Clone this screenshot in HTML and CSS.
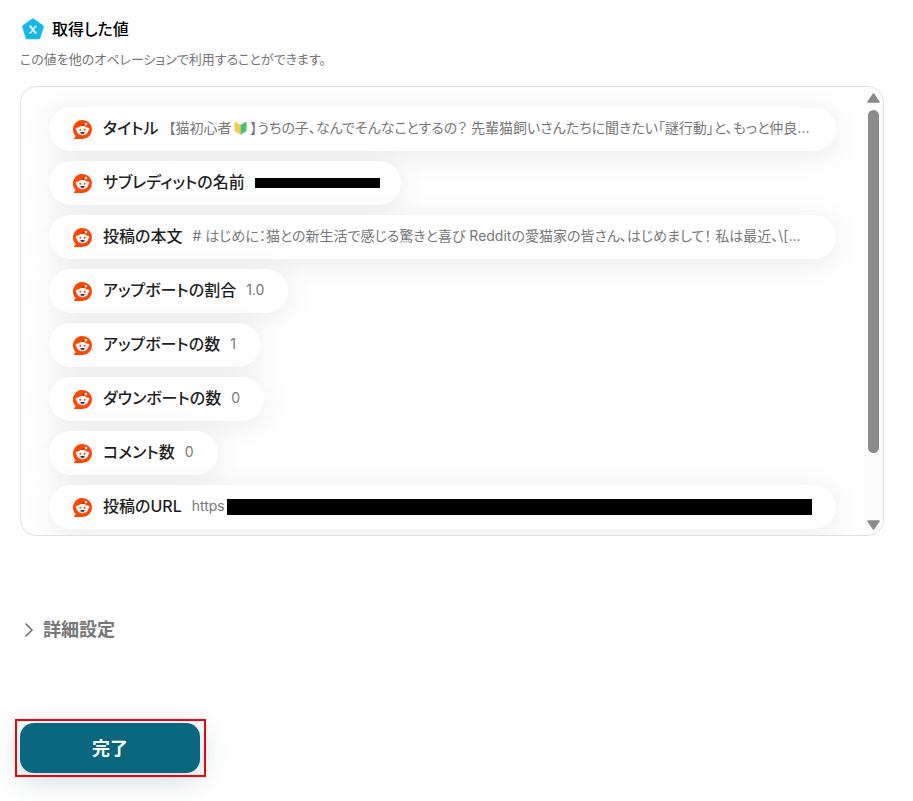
FILE: index.html
```html
<!DOCTYPE html>
<html lang="ja">
<head>
    <meta charset="UTF-8">
    <meta name="viewport" content="width=device-width, initial-scale=1.0">
    <title>取得した値</title>
    <link rel="stylesheet" href="styles.css">
</head>
<body>
    <!-- shared icon for every value -->
    <svg class="sprite" aria-hidden="true">
        <defs>
            <linearGradient id="face" x1="0" y1="0" x2="0" y2="1">
                <stop offset="0.4" stop-color="#ffffff"/>
                <stop offset="1" stop-color="#c3d3dc"/>
            </linearGradient>
        </defs>
        <symbol id="reddit" viewBox="0 0 18 18">
            <path d="M9 0a9 9 0 1 1 0 18H1.500c-.6 0-.8-.6-.4-1l1.500-1.700A9 9 0 0 1 9 0z" fill="#ff4500"/>
            <circle cx="4" cy="8.600" r="1.500" fill="#f4f7f8"/>
            <circle cx="14" cy="8.600" r="1.500" fill="#f4f7f8"/>
            <path d="M9.200 5.800c0-1.300.9-2 2.300-2.200" fill="none" stroke="#7a1c08" stroke-width="0.800"/>
            <circle cx="12.200" cy="3.900" r="1.300" fill="#f4f7f8"/>
            <ellipse cx="9" cy="10.200" rx="5.500" ry="4.400" fill="url(#face)"/>
            <circle cx="6.900" cy="9.300" r="0.900" fill="#ff4500"/>
            <circle cx="11.100" cy="9.300" r="0.900" fill="#ff4500"/>
            <path d="M6.900 11.600q2.100-.5 4.200 0c-.3 1-1.100 1.500-2.100 1.500s-1.800-.5-2.100-1.500z" fill="#1c2a30"/>
        </symbol>
    </svg>

    <main>
        <h1>
            <svg class="title-icon" viewBox="0 0 24 24" aria-hidden="true">
                <path d="M10.700 1.900a2.200 2.200 0 0 1 2.600 0l8.800 6.300a1.800 1.800 0 0 1 .6 2l-3.300 10.500a2.200 2.200 0 0 1-2.100 1.500H6.700a2.200 2.200 0 0 1-2.100-1.500L1.300 10.200a1.800 1.800 0 0 1 .6-2z" fill="#13b9ec"/>
                <path d="M8.500 9.500h1.200l4.600 6.300h1.200" fill="none" stroke="#fff" stroke-width="1.900" stroke-linejoin="round"/>
                <path d="M15.600 9.500h-1.200l-4.800 6.300H8.400" fill="none" stroke="#fff" stroke-width="1.400" stroke-linejoin="round"/>
            </svg>
            取得した値
        </h1>
        <p class="description">この値を他のオペレーションで利用することができます。</p>

        <div class="values">
            <ul class="value-list">
                <li class="value value-wide">
                    <svg class="icon" aria-hidden="true"><use href="#reddit"/></svg>
                    <span class="label">タイトル</span>
                    <span class="text">【猫初心者<svg class="beginner" viewBox="0 0 13 14" role="img" aria-label="初心者マーク"><path d="M.5 1.500Q.5.300 1.500.9L6.500 4v9.800L1.100 10.500Q.5 10.100.5 9.400z" fill="#fcc850"/><path d="M12.500 1.500q0-1.200-1-.6L6.500 4v9.800l5.400-3.300q.6-.4.600-1.100z" fill="#43c46b"/></svg>】うちの子、なんでそんなことするの？ 先輩猫飼いさんたちに聞きたい「謎行動」と、もっと仲良...</span>
                </li>
                <li class="value">
                    <svg class="icon" aria-hidden="true"><use href="#reddit"/></svg>
                    <span class="label">サブレディットの名前</span>
                    <span class="mask mask-name"></span>
                </li>
                <li class="value value-wide">
                    <svg class="icon" aria-hidden="true"><use href="#reddit"/></svg>
                    <span class="label">投稿の本文</span>
                    <span class="text"># はじめに：猫との新生活で感じる驚きと喜び Redditの愛猫家の皆さん、はじめまして！ 私は最近、\[...</span>
                </li>
                <li class="value">
                    <svg class="icon" aria-hidden="true"><use href="#reddit"/></svg>
                    <span class="label">アップボートの割合</span>
                    <span class="text">1.0</span>
                </li>
                <li class="value">
                    <svg class="icon" aria-hidden="true"><use href="#reddit"/></svg>
                    <span class="label">アップボートの数</span>
                    <span class="text">1</span>
                </li>
                <li class="value">
                    <svg class="icon" aria-hidden="true"><use href="#reddit"/></svg>
                    <span class="label">ダウンボートの数</span>
                    <span class="text">0</span>
                </li>
                <li class="value">
                    <svg class="icon" aria-hidden="true"><use href="#reddit"/></svg>
                    <span class="label">コメント数</span>
                    <span class="text">0</span>
                </li>
                <li class="value value-wide">
                    <svg class="icon" aria-hidden="true"><use href="#reddit"/></svg>
                    <span class="label">投稿のURL</span>
                    <span class="text">https</span>
                    <span class="mask mask-url"></span>
                </li>
            </ul>
            <div class="scrollbar" aria-hidden="true">
                <svg class="arrow" viewBox="0 0 13 10"><path d="M6.500 1 12 9H1z" fill="#8b8b8b" stroke="#8b8b8b" stroke-width="1.500" stroke-linejoin="round"/></svg>
                <div class="track"><div class="thumb"></div></div>
                <svg class="arrow" viewBox="0 0 13 10"><path d="M6.500 9 12 1H1z" fill="#8b8b8b" stroke="#8b8b8b" stroke-width="1.500" stroke-linejoin="round"/></svg>
            </div>
        </div>

        <button type="button" class="advanced">
            <svg class="chevron" viewBox="0 0 10 16" aria-hidden="true"><path d="M1.500 1.500 8 8l-6.500 6.500" fill="none" stroke="#6b6b6b" stroke-width="1.500"/></svg>
            詳細設定
        </button>

        <div class="highlight">
            <button type="button" class="done">完了</button>
        </div>
    </main>
</body>
</html>
```
FILE: styles.css
```css
* {
    box-sizing: border-box;
}
body {
    margin: 0;
    background-color: #fefefe;
    color: #1f1f1f;
    font-family: Inter, "Noto Sans CJK JP", sans-serif;
    font-feature-settings: "palt";
}
.sprite {
    position: absolute;
    width: 0;
    height: 0;
}
main {
    padding: 16px 29px 24px 20px;
}
h1 {
    display: flex;
    align-items: center;
    gap: 7px;
    margin: 0;
    padding-left: 1px;
    color: #000;
    font-size: 16px;
    font-weight: 500;
    line-height: 26px;
}
.title-icon {
    width: 24px;
    height: 24px;
}
.description {
    margin: 7px 0 17px;
    color: #777;
    font-size: 13px;
    line-height: 20px;
}
.values {
    display: flex;
    height: 450px;
    border: 1px solid #e0e0e0;
    border-radius: 16px;
    overflow: hidden;
}
.value-list {
    flex: 1;
    min-width: 0;
    display: flex;
    flex-direction: column;
    align-items: flex-start;
    gap: 10px;
    margin: 0;
    padding: 20px 28px 0;
    list-style: none;
    overflow: hidden;
}
.value {
    flex: none;
    display: flex;
    align-items: center;
    max-width: 100%;
    height: 44px;
    padding: 0 24px;
    border-radius: 22px;
    background-color: #fff;
    box-shadow: 0 4px 30px rgba(0, 0, 0, 0.08);
}
.value-wide {
    width: 100%;
}
.icon {
    flex: none;
    width: 19px;
    height: 19px;
    margin-right: 11px;
}
.label {
    flex: none;
    margin-right: 10px;
    padding-bottom: 2px;
    font-size: 16px;
    font-weight: 500;
    line-height: 24px;
}
.text {
    min-width: 0;
    padding-bottom: 2px;
    color: #777;
    font-size: 14px;
    line-height: 24px;
    white-space: nowrap;
    overflow: hidden;
    text-overflow: ellipsis;
}
.beginner {
    width: 13px;
    height: 14px;
    margin: 0 3px;
    vertical-align: -2px;
}
.mask {
    background-color: #000;
}
.mask-name {
    width: 125px;
    height: 10px;
    margin-right: -3px;
}
.mask-url {
    flex: 1;
    height: 16px;
    margin-left: 2px;
}
.scrollbar {
    display: flex;
    flex-direction: column;
    align-items: center;
    gap: 7px;
    width: 19px;
    padding: 6px 0 5px;
    background-color: #fbfbfb;
}
.arrow {
    width: 13px;
    height: 10px;
}
.track {
    flex: 1;
}
.thumb {
    width: 11px;
    height: 85%;
    border-radius: 6px;
    background-color: #8b8b8b;
}
.advanced {
    display: flex;
    align-items: center;
    gap: 9px;
    margin: 80px 0 76px;
    padding: 0 4px;
    border: none;
    background: none;
    color: #777;
    font: inherit;
    font-size: 18px;
    font-weight: 600;
    line-height: 27px;
    cursor: pointer;
}
.chevron {
    width: 10px;
    height: 16px;
}
.highlight {
    width: fit-content;
    margin-left: -5px;
    padding: 2px 4px 2px 3px;
    border: 2px solid #ff0000;
}
.done {
    display: block;
    width: 180px;
    height: 50px;
    padding: 0 0 2px;
    border: none;
    border-radius: 14px;
    background-color: #0a6780;
    box-shadow: 0 6px 28px rgba(10, 60, 90, 0.2);
    color: #fff;
    font: inherit;
    font-size: 18px;
    font-weight: 600;
    cursor: pointer;
}
.done:hover {
    background-color: #08566b;
}
```
